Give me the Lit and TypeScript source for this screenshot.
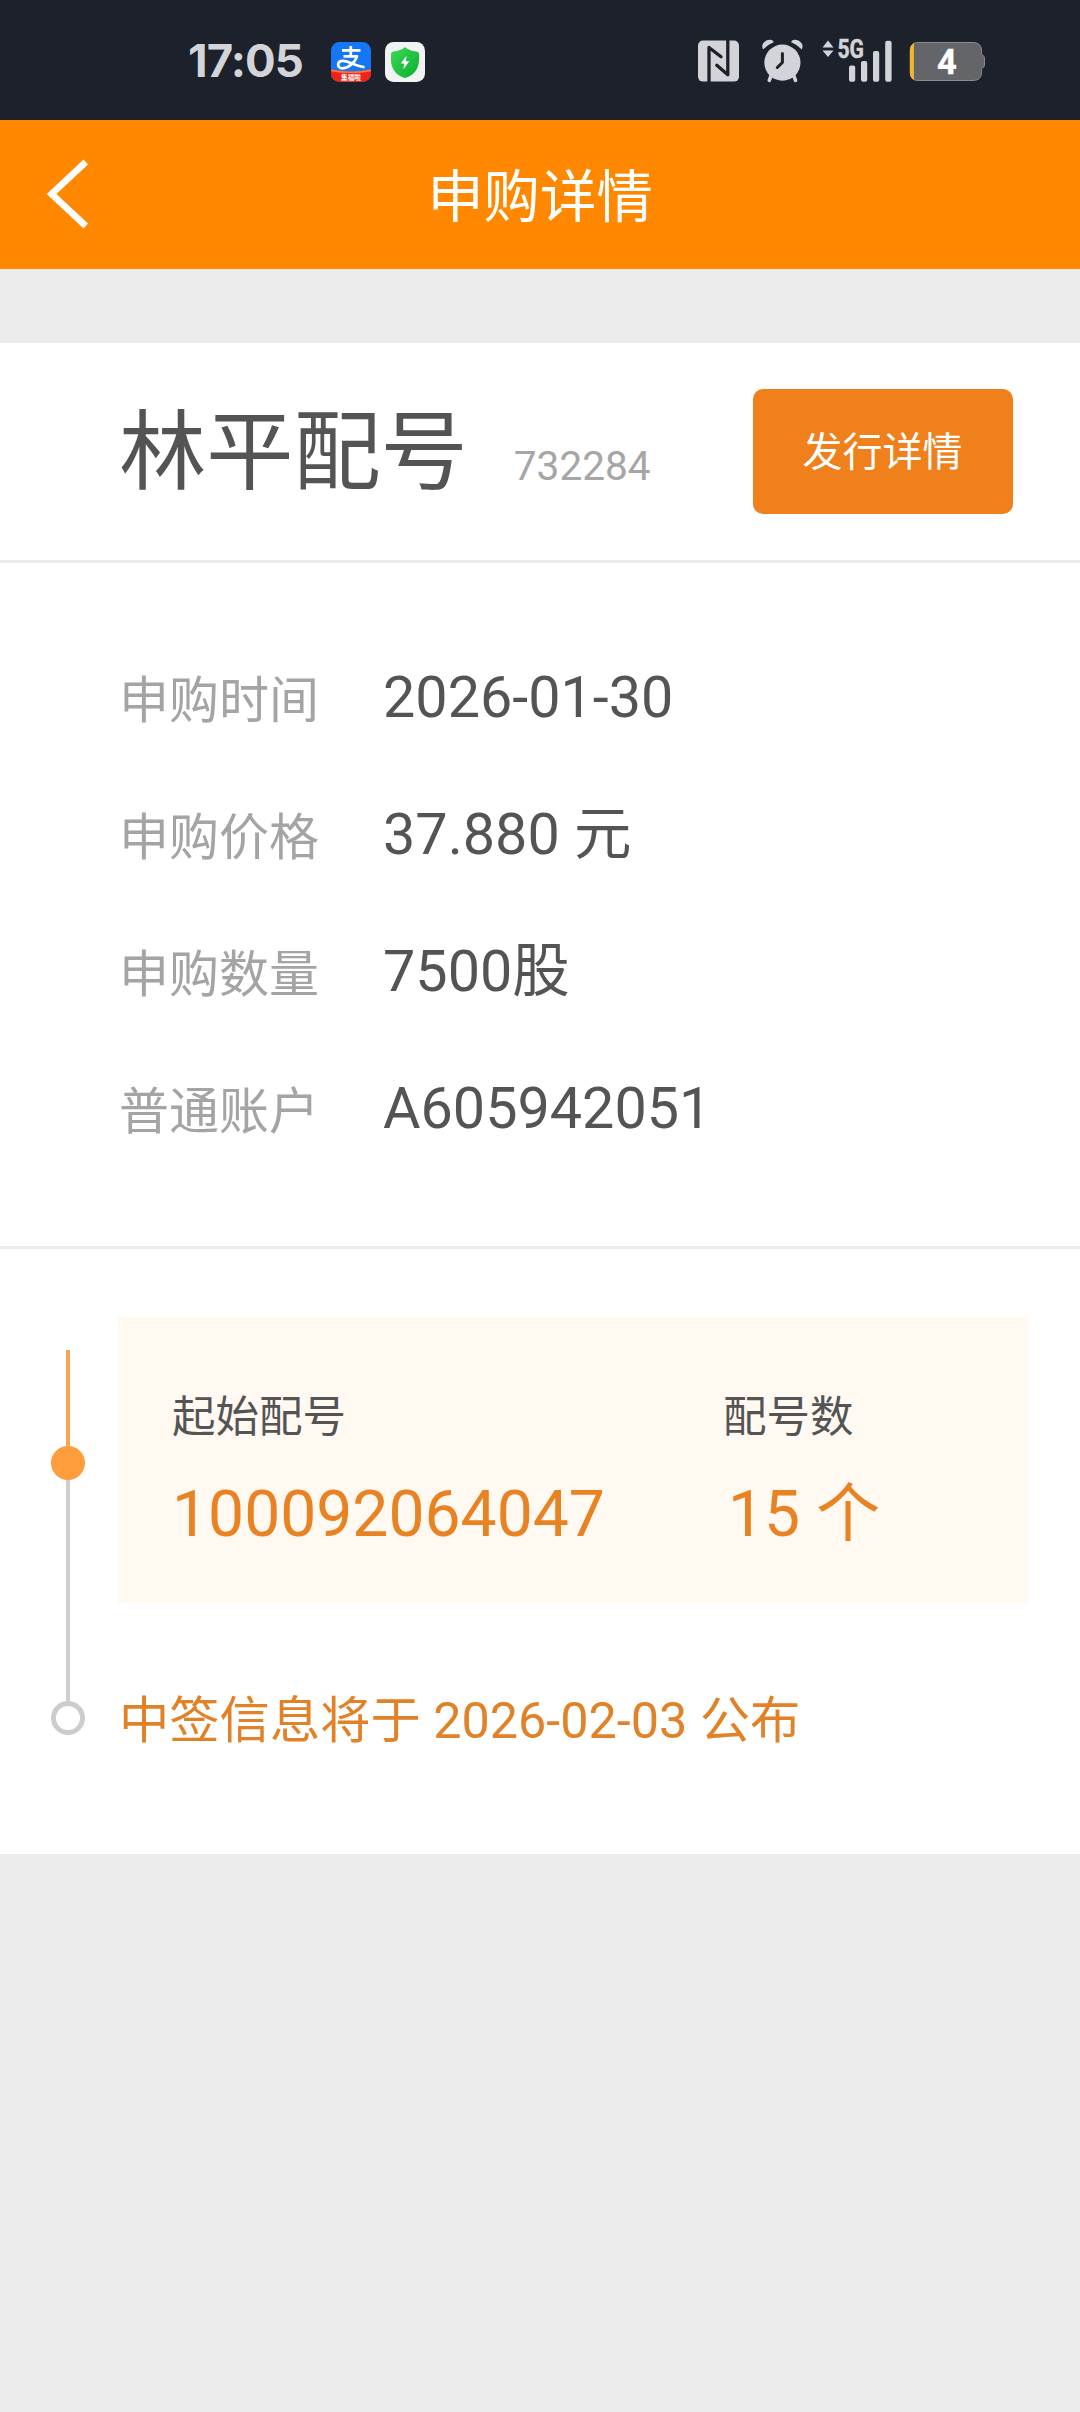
import { LitElement, html, css } from "lit";
import { customElement, property } from "lit/decorators.js";

@customElement("status-bar")
class StatusBar extends LitElement {
  static styles = css`
    :host {
      display: flex;
      box-sizing: border-box;
      height: 120px;
      padding: 28px 92px 0 188px;
      background: #1d212c;
      color: #d3d4d7;
    }
    .time {
      width: 143px;
      padding-top: 10px;
      font: 650 45.5px/45px Inter, "Liberation Sans", sans-serif;
      letter-spacing: -0.9px;
    }
    .apps {
      flex: 1;
      display: flex;
      gap: 14px;
      padding-top: 14px;
    }
    .system {
      display: block;
    }
    svg {
      display: block;
    }
    .banner {
      font: 700 6.6px "Noto Sans CJK SC", sans-serif;
    }
    .net {
      font: 700 25px Roboto, sans-serif;
    }
    .level {
      font: 700 34.5px Roboto, sans-serif;
    }
  `;
  render() {
    return html`
      <div class="time">17:05</div>
      <div class="apps">
        <svg width="40" height="40" viewBox="0 0 40 40">
          <defs>
            <clipPath id="tile"><rect width="40" height="40" rx="8.5" /></clipPath>
          </defs>
          <g clip-path="url(#tile)">
            <rect width="40" height="40" fill="#1677f5" />
            <path d="M0 27.5Q20 31.5 40 27.5V40H0Z" fill="#ef2418" />
            <path d="M0 27.5Q20 31.5 40 27.5V29.2Q20 33 0 29.2Z" fill="#ff7a45" />
          </g>
          <g fill="none" stroke="#fff" stroke-width="2.7">
            <path d="M11 8.3H29.5M19.8 4V14.5M12.5 14.4H27" />
            <path d="M26.2 13.5C24.5 20 18 26.3 11.5 26.3C5.5 26.3 5.8 18.8 12 18.8C18.5 18.8 24.5 24.5 33.5 25.2" />
          </g>
          <text class="banner" x="20" y="37.7" text-anchor="middle" fill="#fff">集福啦</text>
        </svg>
        <svg width="40" height="40" viewBox="0 0 40 40">
          <defs>
            <linearGradient id="leaf" x1="0" y1="0" x2="1" y2="1">
              <stop offset="0" stop-color="#3cd75a" />
              <stop offset="1" stop-color="#0cae2c" />
            </linearGradient>
          </defs>
          <rect width="40" height="40" rx="8.5" fill="#f1f2f2" />
          <path
            d="M20 5.3C22.8 7.6 26.5 9.2 31.5 9.4Q34 9.6 34 12V18C34 27 28.5 33.7 20 36C11.5 33.7 6 27 6 18V12Q6 9.6 8.5 9.4C13.5 9.2 17.2 7.6 20 5.3Z"
            fill="url(#leaf)"
          />
          <path d="M21.6 13.8L15.7 21.5H19.2L18.4 27.2L24.3 19.2H20.8Z" fill="#fff" />
        </svg>
      </div>
      <svg class="system" width="290" height="64" viewBox="698 28 290 64">
        <rect x="698" y="40.6" width="41" height="41" rx="5" fill="#d3d4d7" />
        <path
          d="M709 82V47.5L721 56.8M727.8 40V74.8L716.8 65.2"
          fill="none"
          stroke="#1d212c"
          stroke-width="3.3"
          stroke-linejoin="round"
          stroke-linecap="round"
        />
        <path
          d="M763 49.5Q761.4 46 763.2 43.2Q766 39.8 770 39.8Q773.4 40 773.6 42.2Q767.5 44.5 763 49.5ZM801.8 49.5Q803.4 46 801.6 43.2Q798.8 39.8 794.8 39.8Q791.4 40 791.2 42.2Q797.3 44.5 801.8 49.5Z"
          fill="#d3d4d7"
        />
        <path d="M772 73L769.3 80.3M792.8 73L795.5 80.3" stroke="#d3d4d7" stroke-width="3.6" stroke-linecap="round" />
        <circle cx="782.4" cy="62.6" r="18.1" fill="#d3d4d7" />
        <path d="M782.4 53.5V62.5L777.3 67.5" fill="none" stroke="#1d212c" stroke-width="3" stroke-linecap="round" stroke-linejoin="round" />
        <path d="M822.5 47.5L828 40.5L833.5 47.5ZM822.5 50.5L828 57L833.5 50.5Z" fill="#d3d4d7" />
        <text class="net" x="837.5" y="58" textLength="26.5" lengthAdjust="spacingAndGlyphs" fill="#d3d4d7" stroke="#d3d4d7" stroke-width=".5">5G</text>
        <g fill="#d3d4d7">
          <rect x="849" y="65.5" width="6.2" height="16.2" rx="2" />
          <rect x="861" y="61" width="6.2" height="20.7" rx="2" />
          <rect x="873" y="51" width="6.2" height="30.7" rx="2" />
          <rect x="885.2" y="40.8" width="6.4" height="40.9" rx="2" />
        </g>
        <path
          d="M918 42.5H973Q981 42.5 981.6 50V54.5Q984.5 55.5 984.5 58V65Q984.5 67.5 981.6 68.5V73Q981 80.5 973 80.5H918Q910.5 80.5 910.5 73V50Q910.5 42.5 918 42.5Z"
          fill="#636569"
          stroke="#898b8f"
          stroke-width="1"
        />
        <path d="M913.5 43.5V79.5Q910.2 77 910.2 72.5V50.5Q910.2 46 913.5 43.5Z" fill="#f5b62c" stroke="#f5b62c" stroke-width=".8" />
        <text class="level" x="947" y="73.5" text-anchor="middle" fill="#fff" stroke="#fff" stroke-width=".4">4</text>
      </svg>
    `;
  }
}

@customElement("nav-header")
class NavHeader extends LitElement {
  @property() heading = "";
  static styles = css`
    :host {
      display: grid;
      grid-template-columns: 120px 1fr 120px;
      height: 149px;
      background: #ff8800;
      color: #fff;
    }
    .back {
      display: block;
      margin: 35px 0 0 40px;
    }
    .title {
      padding-top: 8px;
      font: 400 56.4px/140px Roboto, "Noto Sans CJK SC", sans-serif;
      text-align: center;
    }
  `;
  render() {
    return html`
      <svg class="back" width="56" height="80" viewBox="40 155 56 80">
        <path d="M85.8 162L51.5 194L85.8 226" fill="none" stroke="#fff" stroke-width="6.6" />
      </svg>
      <div class="title">${this.heading}</div>
    `;
  }
}

const FIELDS = [
  { label: "申购时间", value: "2026-01-30" },
  { label: "申购价格", value: "37.880 元" },
  { label: "申购数量", value: "7500股" },
  { label: "普通账户", value: "A605942051" },
];

@customElement("app-root")
class AppRoot extends LitElement {
  static styles = css`
    :host {
      display: flex;
      flex-direction: column;
      width: 1080px;
      height: 2412px;
      background: #ebebeb;
      color: #545454;
      font-family: Roboto, "Noto Sans CJK SC", sans-serif;
    }
    .sheet {
      margin-top: 74px;
      background: #fff;
    }
    .summary {
      display: flex;
      box-sizing: border-box;
      height: 220px;
      padding: 46px 67px 0 119px;
      border-bottom: 3px solid #ebebeb;
    }
    .name {
      margin-top: 20px;
      font-size: 87.2px;
      line-height: 88px;
    }
    .code {
      flex: 1;
      margin: 53px 0 0 46px;
      font-size: 40.6px;
      line-height: 48px;
      color: #a6a6a6;
    }
    .more {
      box-sizing: border-box;
      width: 260px;
      height: 125px;
      padding: 3px 1px 0 0;
      border: 0;
      border-radius: 10px;
      background: #f0801b;
      color: #fff;
      font: inherit;
      font-size: 40px;
      line-height: 122px;
      text-align: center;
    }
    .fields {
      box-sizing: border-box;
      height: 686px;
      padding: 66px 0 0 119px;
      border-bottom: 3px solid #ebebeb;
    }
    .field {
      display: grid;
      grid-template-columns: 264px 1fr;
      line-height: 137px;
      height: 137px;
    }
    .label {
      padding-top: 4px;
      font-size: 50px;
      color: #a4a4a4;
    }
    .value {
      font-size: 57.5px;
    }
    .progress {
      display: flex;
      box-sizing: border-box;
      height: 605px;
      padding: 68px 51px 0;
    }
    .rail {
      display: flex;
      flex-direction: column;
      align-items: center;
      width: 34px;
      margin: 33px 33px 0 0;
    }
    .done {
      width: 4px;
      height: 96px;
      background: #f7a655;
    }
    .dot {
      width: 34px;
      height: 34px;
      border-radius: 50%;
      background: #ff9c3c;
    }
    .todo {
      width: 4px;
      height: 221px;
      background: #cfcfcf;
    }
    .ring {
      box-sizing: border-box;
      width: 34px;
      height: 34px;
      border: 5px solid #cccccc;
      border-radius: 50%;
    }
    .steps {
      flex: 1;
    }
    .card {
      display: grid;
      grid-template-columns: 551px 1fr;
      box-sizing: border-box;
      width: 911px;
      height: 286px;
      padding: 71px 0 0 54px;
      background: #fff9f2;
    }
    .caption {
      font-size: 43.5px;
      line-height: 60px;
    }
    .amount {
      margin-top: 26px;
      font-size: 64.2px;
      line-height: 80px;
      color: #e88222;
    }
    .count {
      padding-left: 5px;
    }
    .notice {
      margin-top: 86px;
      padding-left: 1px;
      font-size: 50.3px;
      line-height: 64px;
      color: #e28228;
    }
  `;
  render() {
    return html`
      <status-bar></status-bar>
      <nav-header heading="申购详情"></nav-header>
      <main class="sheet">
        <section class="summary">
          <div class="name">林平配号</div>
          <div class="code">732284</div>
          <button class="more">发行详情</button>
        </section>
        <section class="fields">
          ${FIELDS.map(
            (f) => html`<div class="field">
              <div class="label">${f.label}</div>
              <div class="value">${f.value}</div>
            </div>`
          )}
        </section>
        <section class="progress">
          <div class="rail">
            <div class="done"></div>
            <div class="dot"></div>
            <div class="todo"></div>
            <div class="ring"></div>
          </div>
          <div class="steps">
            <div class="card">
              <div>
                <div class="caption">起始配号</div>
                <div class="amount">100092064047</div>
              </div>
              <div>
                <div class="caption">配号数</div>
                <div class="amount count">15 个</div>
              </div>
            </div>
            <div class="notice">中签信息将于 2026-02-03 公布</div>
          </div>
        </section>
      </main>
    `;
  }
}
